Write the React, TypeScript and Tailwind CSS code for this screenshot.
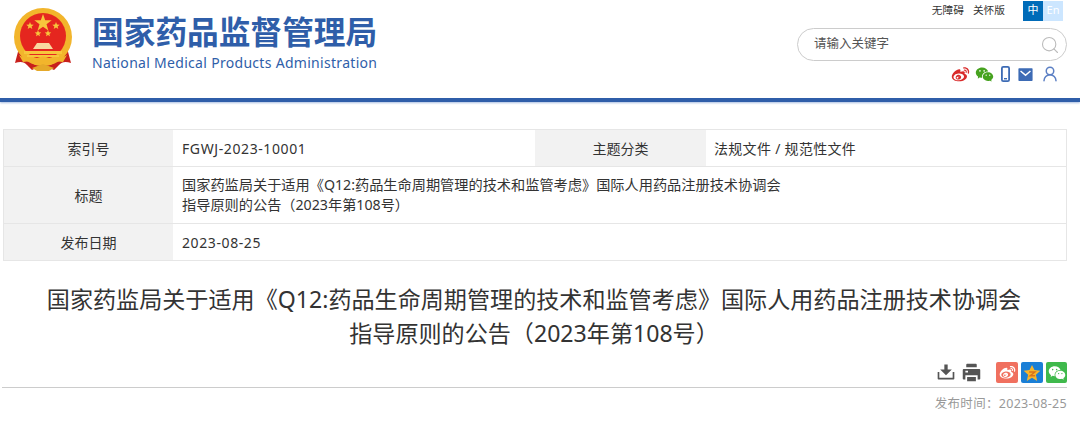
import React from 'react';
import { RiWeiboFill, RiWechatFill, RiDownload2Fill, RiPrinterFill, RiMailFill } from 'react-icons/ri';
import { Search, UserRound } from 'lucide-react';

const font = "font-['Noto_Sans','Noto_Sans_CJK_SC',sans-serif]";

// national emblem, simplified
const Emblem = () => (
    <svg width="60" height="64" viewBox="0 0 60 64" className="shrink-0">
        <path d="M6 40 L2 55 Q10 52 14 57 L19 62 L30 57 L41 62 L46 57 Q50 52 58 55 L54 40 Z" fill="#c8201c" />
        <circle cx="30" cy="29" r="29" fill="#f2b52c" />
        <circle cx="30" cy="28" r="23" fill="#e5261f" />
        <path d="M30 6 l2.2 6.2 6.5 .1 -5.2 3.9 1.9 6.2 -5.4 -3.7 -5.4 3.7 1.9 -6.2 -5.2 -3.9 6.5 -.1z" fill="#f7c63c" />
        <path d="M17 14 l1 2.6 2.7 .1 -2.1 1.7 .7 2.6 -2.3 -1.5 -2.3 1.5 .7 -2.6 -2.1 -1.7 2.7 -.1z" fill="#f7c63c" />
        <path d="M43 14 l1 2.6 2.7 .1 -2.1 1.7 .7 2.6 -2.3 -1.5 -2.3 1.5 .7 -2.6 -2.1 -1.7 2.7 -.1z" fill="#f7c63c" />
        <path d="M25 22 l.9 2.3 2.4 .1 -1.9 1.5 .6 2.3 -2 -1.3 -2 1.3 .6 -2.3 -1.9 -1.5 2.4 -.1z" fill="#f7c63c" />
        <path d="M35 22 l.9 2.3 2.4 .1 -1.9 1.5 .6 2.3 -2 -1.3 -2 1.3 .6 -2.3 -1.9 -1.5 2.4 -.1z" fill="#f7c63c" />
        <path d="M20 41 L24 35 H36 L40 41 Z" fill="#f9d9a0" />
        <rect x="11" y="43" width="38" height="3" fill="#f7c63c" />
        <rect x="14" y="47" width="32" height="2" fill="#f7c63c" />
        <path d="M6 47 Q18 54 24 50 Q30 47 36 50 Q42 54 54 47 L50 54 Q42 52 38 57 H22 Q18 52 10 54 Z" fill="#f2b52c" />
        <path d="M19 60 L30 56 L41 60 L36 63 H24 Z" fill="#e5a92a" />
    </svg>
);

const QzoneIcon = () => (
    <svg width="18" height="18" viewBox="0 0 16 16">
        <path d="M8 0.8 L10.2 5.4 15.4 6 11.5 9.6 12.6 15 8 12.3 3.4 15 4.5 9.6 0.6 6 5.8 5.4Z" fill="#f7b52c" />
        <path d="M5.5 7.2 H10.5 L6.5 10.4 H10.8" fill="none" stroke="#d9731a" strokeWidth="1.3" />
    </svg>
);

const PhoneIcon = () => (
    <svg width="9" height="16" viewBox="0 0 9 16">
        <rect x="0.9" y="0.9" width="7.2" height="14.2" rx="1.4" fill="none" stroke="#3d6bb5" strokeWidth="1.8" />
        <rect x="3" y="12" width="3" height="1.4" fill="#3d6bb5" />
    </svg>
);

const Row = ({ label, className, children }: { label: string; className: string; children: React.ReactNode }) => (
    <div className={`flex border-b border-[#e6e6e6] ${className}`}>
        <div className="flex w-[169px] shrink-0 items-center justify-center bg-[#f2f2f2]">{label}</div>
        {children}
    </div>
);

export default function App() {
    return (
        <div className={`${font} h-[425px] w-[1080px] overflow-hidden bg-white text-[#333]`}>
            {/* Header */}
            <header className="flex h-[102px] border-b-[4px] border-[#2f5ea9] pl-[13px] shadow-[0_1px_2px_#a9bde0]">
                <div className="mt-[8px]">
                    <Emblem />
                </div>
                <div className="ml-[19px] mt-[13px] w-[290px]">
                    <div className="text-[31.7px] leading-[38px] font-bold whitespace-nowrap text-[#2f5ea9]">国家药品监督管理局</div>
                    <div className="mt-[3px] text-[14px] leading-[18px] tracking-[0.3px] whitespace-nowrap text-[#2f5ea9]">National Medical Products Administration</div>
                </div>
                <div className="ml-auto mr-[13px] flex w-[270px] flex-col items-end">
                    <div className="flex h-[21px] items-center pr-[4px]">
                        <span className="text-[10.7px] leading-none">无障碍</span>
                        <span className="ml-[9px] text-[10.7px] leading-none">关怀版</span>
                        <span className="ml-[18px] flex h-[20px] w-[20px] items-center justify-center bg-[#006bb8] text-[11px] text-white">中</span>
                        <span className="flex h-[20px] w-[20px] items-center justify-center bg-[#cce6ff] text-[11px] text-white">En</span>
                    </div>
                    <div className="mt-[7px] flex h-[33px] w-[270px] items-center justify-between rounded-full border border-[#ccc] pl-[16px] pr-[6px]">
                        <span className="text-[12.5px] text-[#555]">请输入关键字</span>
                        <Search size={20} strokeWidth={1.3} className="text-[#bbb]" />
                    </div>
                    <div className="mt-[4px] flex h-[18px] items-center pr-[8px] text-[#3d6bb5]">
                        <RiWeiboFill size={19} className="text-[#d92a2a]" />
                        <RiWechatFill size={19} className="ml-[5px] text-[#46a21f]" />
                        <span className="ml-[7px] flex"><PhoneIcon /></span>
                        <RiMailFill size={17} className="ml-[7px]" />
                        <UserRound size={18} strokeWidth={2} className="ml-[7px] text-[#5b7fc4]" />
                    </div>
                </div>
            </header>

            {/* Info table */}
            <section className="mx-[3px] mt-[27px] w-[1064px] border-t border-l border-r border-[#e6e6e6] text-[14px]">
                <Row label="索引号" className="h-[37px]">
                    <div className="flex w-[362px] items-center pl-[9px] tracking-[0.6px]">FGWJ-2023-10001</div>
                    <div className="flex w-[171px] items-center justify-center bg-[#f2f2f2]">主题分类</div>
                    <div className="flex items-center pl-[8px] tracking-[0.3px]">法规文件 / 规范性文件</div>
                </Row>
                <Row label="标题" className="h-[57px]">
                    <div className="flex flex-col justify-center pl-[9px] text-[14.2px] leading-[20px]">
                        <div className="whitespace-nowrap">国家药监局关于适用《Q12:药品生命周期管理的技术和监管考虑》国际人用药品注册技术协调会</div>
                        <div className="whitespace-nowrap">指导原则的公告（2023年第108号）</div>
                    </div>
                </Row>
                <Row label="发布日期" className="h-[37px]">
                    <div className="flex items-center pl-[9px] tracking-[0.6px]">2023-08-25</div>
                </Row>
            </section>

            {/* Title */}
            <h1 className="mt-[21px] w-[1068px] text-center text-[23.1px] leading-[34px] font-normal text-[#333]">
                <div className="whitespace-nowrap">国家药监局关于适用《Q12:药品生命周期管理的技术和监管考虑》国际人用药品注册技术协调会</div>
                <div className="whitespace-nowrap">指导原则的公告（2023年第108号）</div>
            </h1>

            {/* Share bar */}
            <div className="mx-[2px] mt-[11px] flex h-[27px] w-[1065px] items-start justify-end border-b border-[#ccc] pt-[1px]">
                <RiDownload2Fill size={20} className="text-[#555]" />
                <RiPrinterFill size={21} className="ml-[5px] text-[#555]" />
                <span className="ml-[14px] flex h-[21px] w-[22px] items-center justify-center rounded-[2px] bg-[#f0705f] text-white">
                    <RiWeiboFill size={17} />
                </span>
                <span className="ml-[3px] flex h-[21px] w-[22px] items-center justify-center rounded-[2px] bg-[#1a7fd6]">
                    <QzoneIcon />
                </span>
                <span className="ml-[3px] flex h-[21px] w-[21px] items-center justify-center rounded-[2px] bg-[#3fb94c] text-white">
                    <RiWechatFill size={18} />
                </span>
            </div>

            {/* Publish date */}
            <div className="mr-[13px] mt-[7px] text-right text-[12.5px] leading-[18px] tracking-[0.3px] text-[#999]">发布时间：2023-08-25</div>
        </div>
    );
}
